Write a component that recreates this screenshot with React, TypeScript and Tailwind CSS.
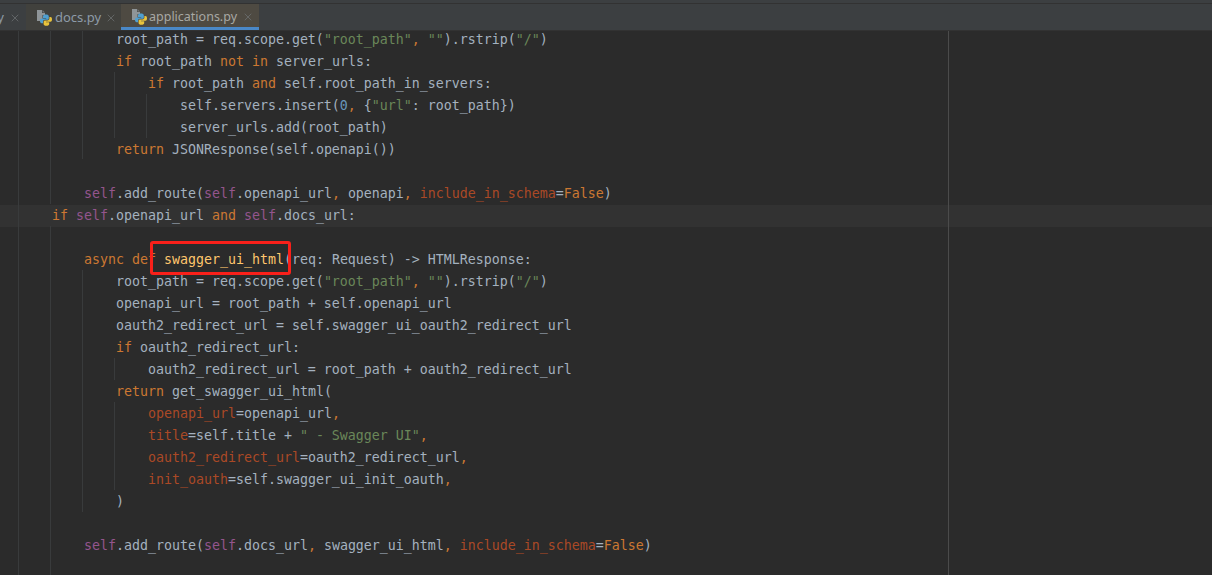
import React from "react";
import { X } from "lucide-react";

type Tok = [string, string?];

const kw = "text-[#cc7832]";
const slf = "text-[#94558d]";
const str = "text-[#6a8759]";
const arg = "text-[#aa4926]";
const fn = "text-[#ffc66d]";

// [indent in spaces, tokens]
const lines: [number, Tok[]][] = [
  [8, [["root_path = req.scope.get("], ['"root_path"', str], [", ", kw], ['""', str], [").rstrip("], ['"/"', str], [")"]]],
  [8, [["if ", kw], ["root_path "], ["not in ", kw], ["server_urls:"]]],
  [12, [["if ", kw], ["root_path "], ["and ", kw], ["self.root_path_in_servers:"]]],
  [16, [["self.servers.insert("], ["0", "text-[#6897bb]"], [", ", kw], ["{"], ['"url"', str], [": root_path})"]]],
  [16, [["server_urls.add(root_path)"]]],
  [8, [["return ", kw], ["JSONResponse(self.openapi())"]]],
  [0, []],
  [4, [["self", slf], [".add_route("], ["self", slf], [".openapi_url"], [", ", kw], ["openapi"], [", ", kw], ["include_in_schema", arg], ["="], ["False", kw], [")"]]],
  [0, [["if ", kw], ["self", slf], [".openapi_url "], ["and ", kw], ["self", slf], [".docs_url:"]]],
  [0, []],
  [4, [["async def ", kw], ["swagger_ui_html", fn], ["(req: Request) -> HTMLResponse:"]]],
  [8, [["root_path = req.scope.get("], ['"root_path"', str], [", ", kw], ['""', str], [").rstrip("], ['"/"', str], [")"]]],
  [8, [["openapi_url = root_path + self.openapi_url"]]],
  [8, [["oauth2_redirect_url = self.swagger_ui_oauth2_redirect_url"]]],
  [8, [["if ", kw], ["oauth2_redirect_url:"]]],
  [12, [["oauth2_redirect_url = root_path + oauth2_redirect_url"]]],
  [8, [["return ", kw], ["get_swagger_ui_html("]]],
  [12, [["openapi_url", arg], ["=openapi_url"], [",", kw]]],
  [12, [["title", arg], ["=self.title + "], ['" - Swagger UI"', str], [",", kw]]],
  [12, [["oauth2_redirect_url", arg], ["=oauth2_redirect_url"], [",", kw]]],
  [12, [["init_oauth", arg], ["=self.swagger_ui_init_oauth"], [",", kw]]],
  [8, [[")"]]],
  [0, []],
  [4, [["self", slf], [".add_route("], ["self", slf], [".docs_url"], [", ", kw], ["swagger_ui_html"], [", ", kw], ["include_in_schema", arg], ["="], ["False", kw], [")"]]],
  [0, []],
];

const PyIcon = () => (
  <svg width="16" height="16" viewBox="0 0 16 16" className="shrink-0">
    <path d="M1 0h5v3h3v2H6.500v6H1z" fill="#8f9598" />
    <path d="M6.500 0l2.500 2.600H6.500z" fill="#6f7578" />
    <path d="M10 4.500c-2 0-3 .6-3 1.800V8h3.200v.6H5.700C4.500 8.600 4 9.600 4 11c0 1.400.6 2.200 1.700 2.200H7v-1.500c0-1.100.8-1.900 2-1.900h2.400c.8 0 1.400-.6 1.400-1.400V6.300c0-1.200-1.200-1.800-2.800-1.800z" fill="#4f9fd0" />
    <path d="M10.200 15.800c2 0 3-.6 3-1.800v-1.700H10v-.6h4.500c1.200 0 1.500-1 1.500-2.400 0-1.400-.5-2.200-1.600-2.200h-1v1.500c0 1.100-.8 1.900-2 1.900H9c-.8 0-1.400.6-1.400 1.400V14c0 1.200 1 1.800 2.600 1.800z" fill="#e8c33c" />
  </svg>
);

export default function App() {
  return (
    <div className="w-[1212px] h-[575px] overflow-hidden flex flex-col bg-[#2b2b2b]">
      {/* tabs */}
      <div className="h-[4px] bg-[#3c3f41] border-b border-[#323232]" />
      <div className="h-[27px] flex bg-[#3c3f41] border-b border-[#323232] font-['Noto_Sans',sans-serif] text-[13px]">
        <div className="w-[26px] flex items-center justify-end pr-[5px] pt-[1px]">
          <span className="text-[#8d9ba8] mr-[5px]">y</span>
          <X size={12} strokeWidth={1.5} className="text-[#6e7173] shrink-0" />
        </div>
        <div className="w-[95px] flex items-center pl-[10px] pt-[1px] bg-[#41413d]">
          <PyIcon />
          <span className="ml-[3px] text-[#8d9ba8]">docs.py</span>
          <X size={12} strokeWidth={1.5} className="ml-[4px] text-[#6e7173]" />
        </div>
        <div className="w-[138px] flex items-center pl-[10px] pt-[3px] bg-[#4e4a42] border-b-[3px] border-[#4a88c7]">
          <PyIcon />
          <span className="ml-[2px] text-[12.5px] text-[#a8a8a4]">applications.py</span>
          <X size={12} strokeWidth={1.5} className="ml-[5px] text-[#6e7173]" />
        </div>
      </div>

      {/* editor */}
      <div className="relative flex-1 overflow-hidden font-['DejaVu_Sans_Mono',monospace] text-[13.29px] text-[#a4b1bf]">
        <div className="-mt-[2px]">
          {lines.map(([indent, toks], i) => (
            <div
              key={i}
              className={`h-[22px] leading-[22px] whitespace-pre pl-[52px] ${i === 8 ? "bg-[#323232]" : ""}`}
            >
              {" ".repeat(indent)}
              {toks.map(([t, c], j) => (
                <span key={j} className={c}>
                  {t}
                </span>
              ))}
            </div>
          ))}
        </div>

        {/* indent guides + right margin */}
        <div className="absolute left-[18px] top-0 bottom-0 w-px bg-[#393b3c]" />
        <div className="absolute left-[50px] top-0 h-[173px] w-px bg-[#393b3c]" />
        <div className="absolute left-[50px] top-[195px] bottom-0 w-px bg-[#393b3c]" />
        <div className="absolute left-[82px] top-0 h-[128px] w-px bg-[#393b3c]" />
        <div className="absolute left-[82px] top-[239px] h-[242px] w-px bg-[#393b3c]" />
        <div className="absolute left-[114px] top-[41px] h-[66px] w-px bg-[#393b3c]" />
        <div className="absolute left-[146px] top-[63px] h-[44px] w-px bg-[#393b3c]" />
        <div className="absolute left-[114px] top-[327px] h-[22px] w-px bg-[#393b3c]" />
        <div className="absolute left-[114px] top-[371px] h-[88px] w-px bg-[#393b3c]" />
        <div className="absolute left-[948px] top-0 bottom-0 w-px bg-[#4b4b4b]" />

        {/* red annotation box */}
        <div className="absolute left-[150px] top-[210px] w-[141px] h-[34px] border-[3px] border-[#f9201a] rounded-[3px]" />
      </div>
    </div>
  );
}
